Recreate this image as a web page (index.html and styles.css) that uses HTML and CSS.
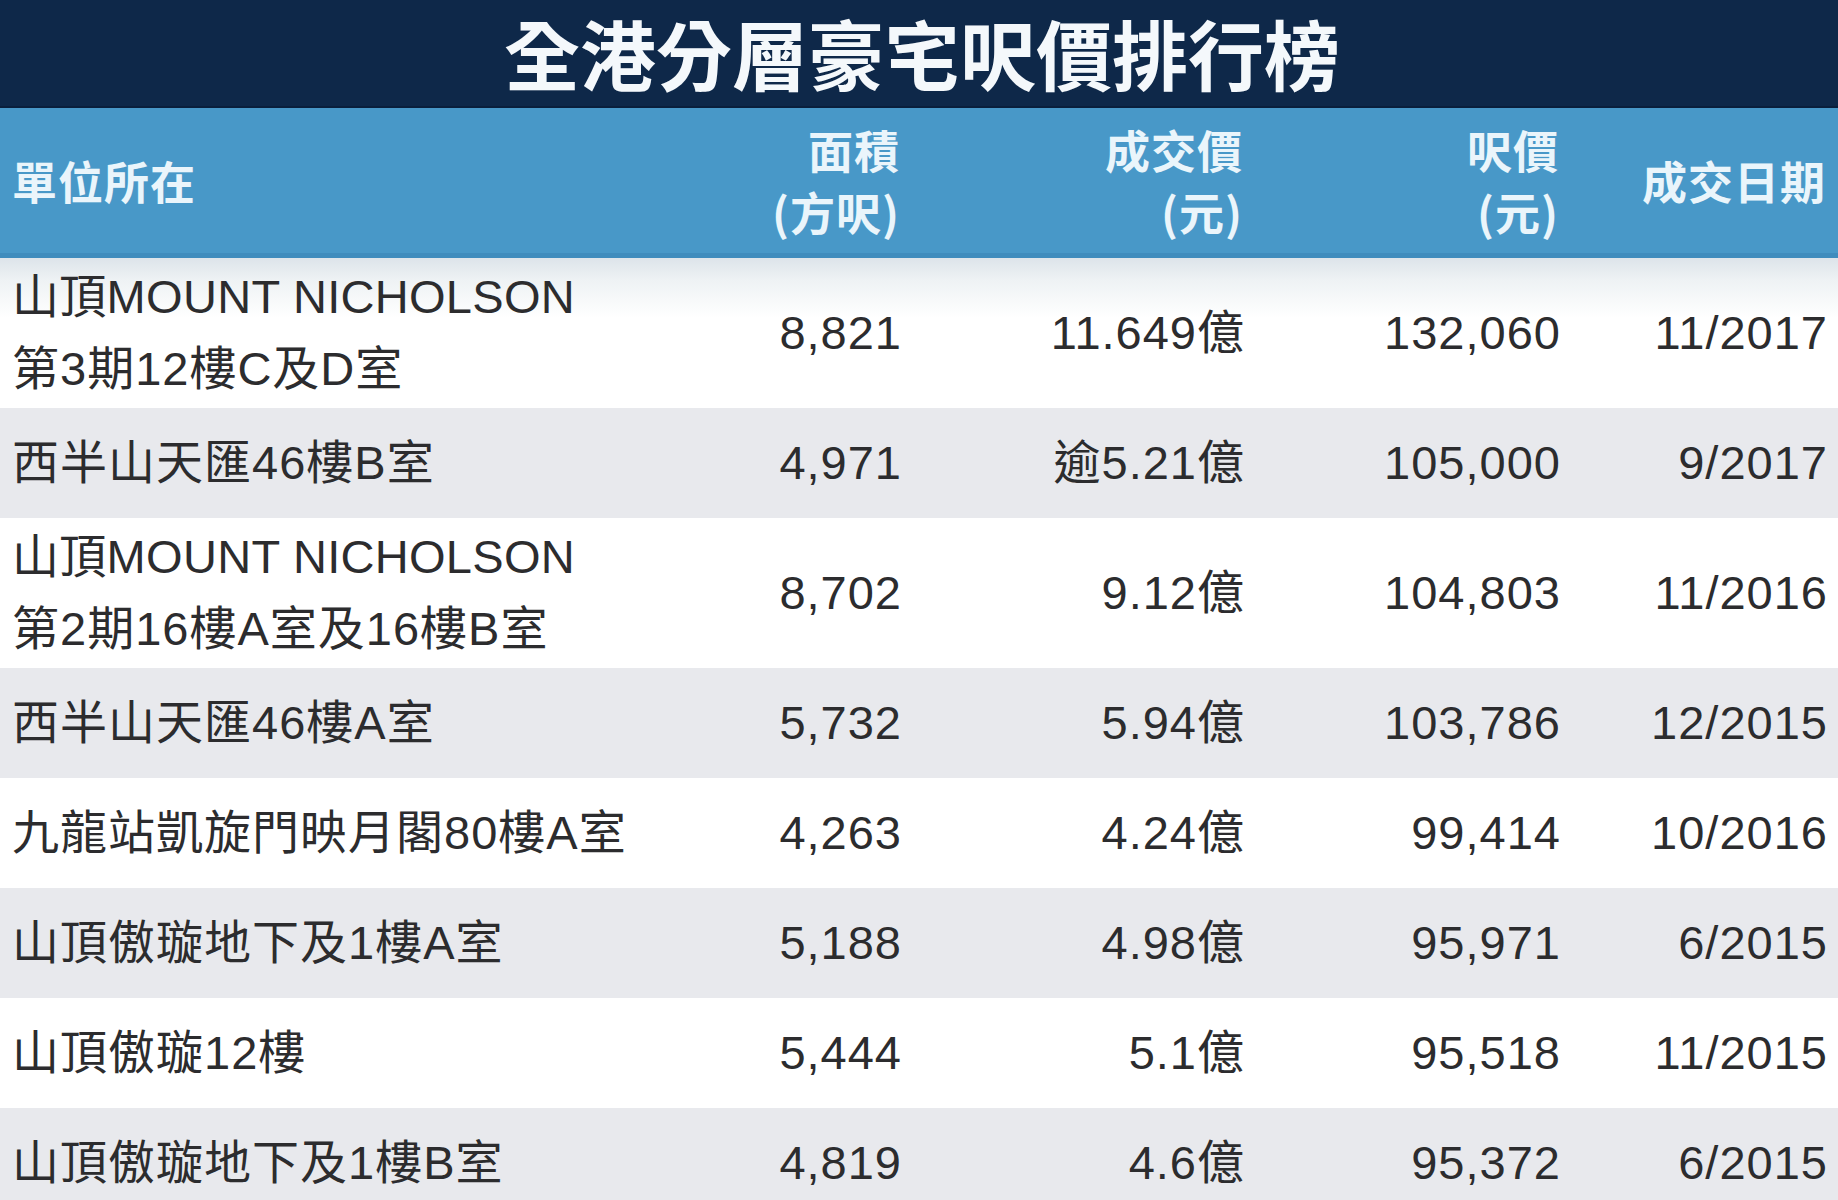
FILE: index.html
```html
<!DOCTYPE html>
<html lang="zh-Hant">
<head>
<meta charset="utf-8">
<title>全港分層豪宅呎價排行榜</title>
<link rel="stylesheet" href="styles.css">
</head>
<body>
<div class="board">
  <header class="title-bar">
    <h1 class="title">全港分層豪宅呎價排行榜</h1>
  </header>
  <div class="row head">
    <div class="cell name">單位所在</div>
    <div class="cell num">面積<br>(方呎)</div>
    <div class="cell num">成交價<br>(元)</div>
    <div class="cell num">呎價<br>(元)</div>
    <div class="cell num">成交日期</div>
  </div>
  <div class="row tall first">
    <div class="cell name"><span class="en">山頂MOUNT NICHOLSON</span><br>第3期12樓C及D室</div>
    <div class="cell num">8,821</div>
    <div class="cell num">11.649億</div>
    <div class="cell num">132,060</div>
    <div class="cell num">11/2017</div>
  </div>
  <div class="row alt">
    <div class="cell name">西半山天匯46樓B室</div>
    <div class="cell num">4,971</div>
    <div class="cell num">逾5.21億</div>
    <div class="cell num">105,000</div>
    <div class="cell num">9/2017</div>
  </div>
  <div class="row tall">
    <div class="cell name"><span class="en">山頂MOUNT NICHOLSON</span><br>第2期16樓A室及16樓B室</div>
    <div class="cell num">8,702</div>
    <div class="cell num">9.12億</div>
    <div class="cell num">104,803</div>
    <div class="cell num">11/2016</div>
  </div>
  <div class="row alt">
    <div class="cell name">西半山天匯46樓A室</div>
    <div class="cell num">5,732</div>
    <div class="cell num">5.94億</div>
    <div class="cell num">103,786</div>
    <div class="cell num">12/2015</div>
  </div>
  <div class="row">
    <div class="cell name">九龍站凱旋門映月閣80樓A室</div>
    <div class="cell num">4,263</div>
    <div class="cell num">4.24億</div>
    <div class="cell num">99,414</div>
    <div class="cell num">10/2016</div>
  </div>
  <div class="row alt">
    <div class="cell name">山頂傲璇地下及1樓A室</div>
    <div class="cell num">5,188</div>
    <div class="cell num">4.98億</div>
    <div class="cell num">95,971</div>
    <div class="cell num">6/2015</div>
  </div>
  <div class="row">
    <div class="cell name">山頂傲璇12樓</div>
    <div class="cell num">5,444</div>
    <div class="cell num">5.1億</div>
    <div class="cell num">95,518</div>
    <div class="cell num">11/2015</div>
  </div>
  <div class="row alt">
    <div class="cell name">山頂傲璇地下及1樓B室</div>
    <div class="cell num">4,819</div>
    <div class="cell num">4.6億</div>
    <div class="cell num">95,372</div>
    <div class="cell num">6/2015</div>
  </div>
</div>
</body>
</html>
```
FILE: styles.css
```css
html, body {
  margin: 0;
  padding: 0;
  background: #ffffff;
}

body {
  width: 1838px;
  height: 1200px;
  overflow: hidden;
  font-family: "Liberation Sans", "Noto Sans CJK TC", sans-serif;
  color: #2c2c2e;
}

.board {
  display: flex;
  flex-direction: column;
}

.title-bar {
  height: 108px;
  background: #0e2849;
  border-bottom: 2px solid #0a1f3c;
  box-sizing: border-box;
  display: flex;
  justify-content: center;
  align-items: flex-start;
}

.title {
  margin: 0;
  padding-left: 6px;
  font-family: "Noto Sans CJK TC", sans-serif;
  font-weight: 700;
  font-size: 76px;
  line-height: 104px;
  letter-spacing: 0;
  color: #f4f8fb;
  white-space: nowrap;
}

.row {
  display: grid;
  grid-template-columns: 548px 342px 343px 316px 267px;
  padding: 0 10px 0 12px;
  height: 110px;
  align-items: center;
  background: #ffffff;
  font-size: 47px;
  line-height: 72px;
  letter-spacing: 1px;
}

.row.tall {
  height: 150px;
}

.row.alt {
  background: #e8e9ed;
}

.row.first {
  background: linear-gradient(#dde4ea 0px, #eef2f4 22px, #ffffff 60px);
}

.row.head {
  height: 150px;
  background: #4898c8;
  border-bottom: 5px solid #3f8cbd;
  box-sizing: border-box;
  font-family: "Noto Sans CJK TC", sans-serif;
  font-weight: 700;
  font-size: 45px;
  line-height: 62px;
  letter-spacing: 1px;
  color: #eaf5fb;
}

.cell {
  white-space: nowrap;
}

.cell.name {
  text-align: left;
}

.cell.name .en {
  letter-spacing: 0.3px;
}

.cell.num {
  text-align: right;
}

.row.head .cell.num {
  padding-right: 2px;
}
```
